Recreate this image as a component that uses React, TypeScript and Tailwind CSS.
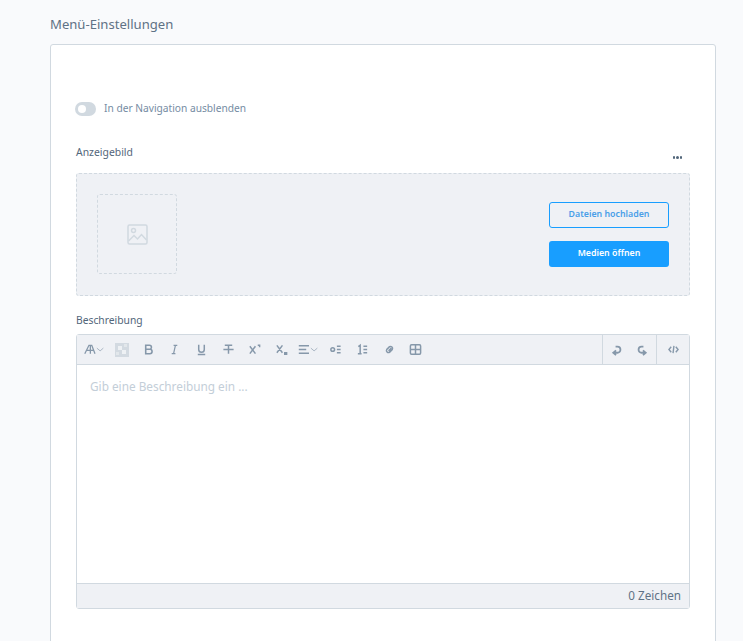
const font = { fontFamily: '"Noto Sans", sans-serif' }

function Tool({ children, wide }: { children: React.ReactNode; wide?: boolean }) {
  return (
    <span className={`flex h-[29px] items-center justify-center ${wide ? 'w-[28px]' : 'w-[26.6px]'}`}>
      <svg width={wide ? 24 : 13} height="13" viewBox={wide ? '0 0 24 14' : '0 0 14 14'} className="text-[#8698aa]" fill="none" stroke="currentColor" strokeWidth="1.6">
        {children}
      </svg>
    </span>
  )
}

const Chevron = () => <path d="M14 5.5l3.5 3 3.5-3" strokeWidth="0.7" />

export default function App() {
  return (
    <div className="h-[641px] overflow-hidden bg-[#f9fafc] pl-[50px] pr-[27px] pt-[15px]" style={font}>
      <h2 className="mb-[10px] h-[19px] text-[13.1px] leading-[19px] font-normal text-[#5f7285]">Menü-Einstellungen</h2>
      <div className="h-[700px] rounded-[3px] border border-[#d1d9e0] bg-white pt-[57px] pr-[25px] pl-[25px]">
        <div className="ml-[-1px] flex h-[14px] items-center">
          <span className="relative mr-[8px] h-[14px] w-[21px] rounded-full bg-[#d1d9e0]">
            <span className="absolute top-[3px] left-[3px] h-[8px] w-[8px] rounded-full bg-white" />
          </span>
          <span className="mt-[-1px] text-[10.2px] text-[#758ca3]">In der Navigation ausblenden</span>
        </div>

        <div className="mt-[30px] flex h-[27px] items-start justify-between">
          <span className="mt-[-1px] text-[10.4px] leading-[14px] text-[#52667a]">Anzeigebild</span>
          <span className="mt-[10px] mr-[8px] flex gap-[1px]">
            <i className="h-[2.5px] w-[2.5px] rounded-full bg-[#52667a]" />
            <i className="h-[2.5px] w-[2.5px] rounded-full bg-[#52667a]" />
            <i className="h-[2.5px] w-[2.5px] rounded-full bg-[#52667a]" />
          </span>
        </div>

        <div className="flex h-[123px] items-center justify-between rounded-[3px] border border-dashed border-[#d1d9e0] bg-[#eff1f5] pr-[20px] pl-[20px]">
          <div className="mt-[-1px] flex h-[80px] w-[80px] items-center justify-center rounded-[3px] border border-dashed border-[#d1d9e0]">
            <svg width="21" height="21" viewBox="0 0 21 21" fill="none" stroke="#d1d9e0" strokeWidth="1.5">
              <rect x="1" y="1" width="19" height="19" rx="1.5" />
              <circle cx="6.5" cy="6.5" r="2" />
              <path d="M1.5 17l5.5-5.5 3.5 3.5 4-4.5 5 5.5" />
            </svg>
          </div>
          <div className="flex w-[120px] flex-col gap-[13px]">
            <button className="flex h-[26px] items-center justify-center rounded-[3px] border border-[#189eff] bg-transparent text-[8.8px] font-semibold text-[#4a9fe8]">Dateien hochladen</button>
            <button className="flex h-[26px] items-center justify-center rounded-[3px] bg-[#189eff] text-[8.8px] font-semibold text-white">Medien öffnen</button>
          </div>
        </div>

        <div className="mt-[17px] mb-[7px] h-[14px] text-[10.3px] leading-[14px] text-[#52667a]">Beschreibung</div>

        <div className="rounded-[3px] border border-[#d1d9e0]">
          <div className="flex h-[30px] items-center justify-between border-b border-[#d1d9e0] bg-[#eff1f5] pl-[4px]">
            <div className="flex items-center">
              <Tool wide>
                <path d="M1 11.5L5.5 2.5h1.5v9M3.5 8h3.5M7 2.5h1.5l3.5 9M7 8h3.5" strokeWidth="1.4" />
                <Chevron />
              </Tool>
              <span className="flex h-[29px] w-[26px] items-center justify-center">
                <svg width="14" height="14" viewBox="0 0 14 14">
                  <rect width="14" height="14" fill="#d3dae1" />
                  <rect x="3" y="3" width="4" height="4" fill="#eef1f4" />
                  <rect x="7" y="7" width="4" height="4" fill="#eef1f4" />
                  <rect x="9" y="1" width="3" height="3" fill="#e2e7eb" />
                  <rect x="1" y="9" width="3" height="3" fill="#e2e7eb" />
                </svg>
              </span>
              <Tool>
                <path d="M4 2.5h4a2 2 0 010 4.3H4zM4 6.8h4.5a2.2 2.2 0 010 4.7H4z" strokeWidth="1.7" />
              </Tool>
              <Tool>
                <path d="M6 2.5h4M4 11.5h4M8 2.5l-2 9" strokeWidth="1.3" />
              </Tool>
              <Tool>
                <path d="M4 2v5a3 3 0 006 0V2M3 12.5h8" />
              </Tool>
              <Tool>
                <path d="M3 2.5h8M7 2.5v9M1.5 7h11" />
              </Tool>
              <Tool>
                <path d="M2 3.5l6 8M8 3.5l-6 8M10.5 2.5h2v2" />
              </Tool>
              <Tool>
                <path d="M2 2.5l6 8M8 2.5l-6 8M10.5 10.5h2v1.5h-2z" />
              </Tool>
              <Tool wide>
                <path d="M1 3h11M1 7h8M1 11h11" />
                <Chevron />
              </Tool>
              <Tool>
                <circle cx="4" cy="7" r="2" />
                <path d="M8.5 3.5h4M8.5 7h4M8.5 10.5h4" />
              </Tool>
              <Tool>
                <path d="M2.5 4l2-1.5V11.5M2 11.5h4M8 3.5h4M8 7h4M8 10.5h4" />
              </Tool>
              <Tool>
                <path d="M6 8.5l3-3M5.5 5.5L4 7a2.2 2.2 0 003 3l1.5-1.5M8.5 8.5L10 7a2.2 2.2 0 00-3-3L5.5 5.5" />
              </Tool>
              <Tool>
                <rect x="1.5" y="2" width="11" height="10" rx="1.2" />
                <path d="M7 2v10M1.5 7h11" />
              </Tool>
            </div>
            <div className="flex h-[29px] items-center">
              <div className="flex h-[29px] items-center border-l border-[#d1d9e0]">
                <Tool>
                  <path d="M6.5 13L3.5 10.5l3-2.5M3.5 10.5H8a3.2 3.2 0 000-6.5H6" strokeWidth="1.9" />
                </Tool>
                <Tool>
                  <path d="M7.5 13l3-2.5-3-2.5M10.5 10.5H6a3.2 3.2 0 010-6.5H8" strokeWidth="1.9" />
                </Tool>
              </div>
              <div className="flex h-[29px] w-[33px] items-center justify-center border-l border-[#d1d9e0]">
                <svg width="11" height="11" viewBox="0 0 12 12" fill="none" stroke="#8698aa" strokeWidth="1.5">
                  <path d="M3.5 3L1 6l2.5 3M8.5 3L11 6 8.5 9M6.5 2l-1 8" />
                </svg>
              </div>
            </div>
          </div>

          <div className="h-[218px] bg-white pt-[11px] pr-[13px] pl-[13px] text-[11.8px] leading-[20px] text-[#c3ced8]">Gib eine Beschreibung ein ...</div>

          <div className="flex h-[25px] items-center justify-end border-t border-[#d1d9e0] bg-[#eff1f5] pr-[8px] text-[11.7px] text-[#5f7285]">0 Zeichen</div>
        </div>
      </div>
    </div>
  )
}
